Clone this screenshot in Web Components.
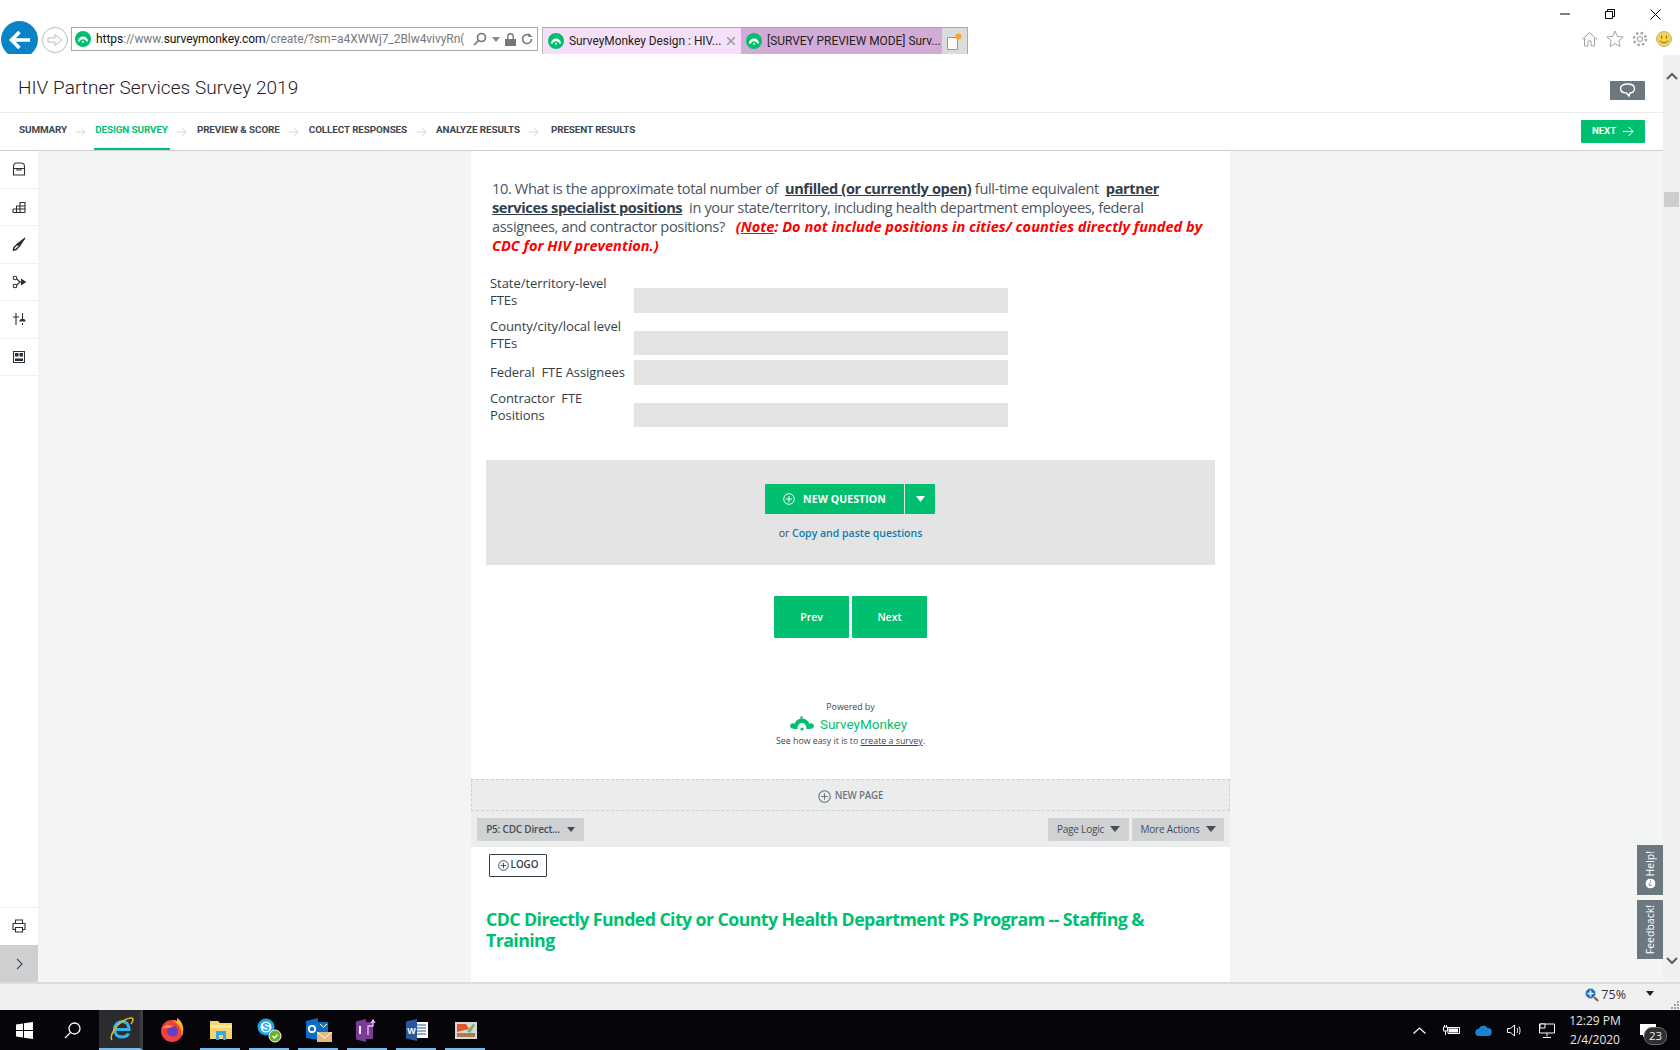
<!DOCTYPE html>
<html>
<head>
<meta charset="utf-8">
<title>HIV Partner Services Survey 2019</title>
<style>
  html, body { margin: 0; height: 100%; overflow: hidden; background: #fff; }
  body { display: flex; flex-direction: column; width: 1680px; height: 1050px; font-family: Roboto, "Liberation Sans", sans-serif; }
</style>
</head>
<body>
<browser-bar></browser-bar>
<page-area></page-area>
<status-bar></status-bar>
<task-bar></task-bar>

<script>
(function () {
'use strict';

const FAVICON = `<svg width="16" height="16" viewBox="0 0 16 16"><circle cx="8" cy="8" r="8" fill="#00bf6f"/><path d="M2.800 10.600c.3-3.200 2.400-5.200 5.200-5.200s4.900 2 5.200 5.200h-2c-.3-1.400-1.500-2.400-3.200-2.400s-2.900 1-3.200 2.400z" fill="#fff"/><circle cx="8" cy="10.800" r="1" fill="#fff"/></svg>`;
const PLUS = (size, color) => `<svg width="${size}" height="${size}" viewBox="0 0 12 12" fill="none" stroke="${color}" stroke-width="1"><circle cx="6" cy="6" r="5.300"/><path d="M6 3v6M3 6h6"/></svg>`;
const ARROW = `<svg width="12" height="10" viewBox="0 0 12 10" fill="none" stroke="#d3d6d8" stroke-width="1"><path d="M1 5h9M6.500 1.500 10 5 6.500 8.500"/></svg>`;

function define(name, css, html) {
    let template = document.createElement('template');
    template.innerHTML = `<style>${css}</style>${html}`;
    customElements.define(name, class extends HTMLElement {
        constructor() {
            super();
            this.attachShadow({ mode: 'open' }).appendChild(document.importNode(template.content, true));
        }
    });
}

define('browser-bar', `
    :host { display: flex; flex: none; height: 54px; align-items: flex-start; position: relative; background: #fff; font: 13px Roboto, sans-serif; color: #222; }
    .back { flex: none; width: 37px; height: 37px; margin: 21px 0 0 1px; border-radius: 50%; background: #0a84c6; display: flex; align-items: center; justify-content: center; clip-path: inset(0 0 4px 0); }
    .fwd { flex: none; width: 24px; height: 24px; margin: 27px 0 0 4px; border: 1px solid #bbb; border-radius: 50%; display: flex; align-items: center; justify-content: center; }
    .addr { flex: none; box-sizing: border-box; width: 467px; height: 24px; margin: 27px 0 0 3px; border: 1px solid #a9a9a9; display: flex; align-items: center; padding: 0 4px 0 3px; gap: 5px; }
    .url { flex: 1; white-space: nowrap; overflow: hidden; font-size: 12px; letter-spacing: -.06px; color: #777; }
    .url b { font-weight: 400; color: #111; }
    .tools { display: flex; align-items: center; gap: 5px; flex: none; }
    .tabs { flex: none; display: flex; height: 27px; margin: 27px 0 0 4px; box-sizing: border-box; border-top: 1px solid #aaa; }
    .tab { box-sizing: border-box; width: 200px; display: flex; align-items: center; gap: 4px; padding: 0 6px 0 5px; white-space: nowrap; font-size: 11.900px; }
    .tab.on { background: #f5dff9; border-left: 1px solid #bbb; width: 199px; }
    .tab.off { background: #d3abd7; width: 201px; padding-right: 1px; }
    .tab span { flex: 1; overflow: hidden; }
    .new { box-sizing: border-box; width: 26px; background: #dcdcdc; border-right: 1px solid #aaa; display: flex; align-items: center; justify-content: center; }
    .win { position: absolute; top: 8px; right: 19px; display: flex; align-items: center; gap: 35px; }
    .icons { position: absolute; top: 30px; right: 8px; display: flex; align-items: center; gap: 8px; }
`, `
    <div class="back"><svg width="24" height="20" viewBox="0 0 24 20" fill="none" stroke="#fff" stroke-width="3.600"><path d="M22 10H4M11.500 2 3.500 10l8 8"/></svg></div>
    <div class="fwd"><svg width="16" height="14" viewBox="0 0 16 14" fill="none" stroke="#bbb"><path d="M1 5h7V1.500L15 7l-7 5.500V9H1z"/></svg></div>
    <div class="addr">
      ${FAVICON}
      <div class="url"><b>https</b>://www.<b>surveymonkey.com</b>/create/?sm=a4XWWj7_2Blw4vivyRn(</div>
      <div class="tools">
        <svg width="14" height="14" viewBox="0 0 14 14" fill="none" stroke="#777" stroke-width="1.700"><circle cx="8.500" cy="5.500" r="4"/><path d="M5.500 8.500 1 13"/></svg>
        <svg width="8" height="5" viewBox="0 0 8 5"><path d="M0 0h8L4 5z" fill="#888"/></svg>
        <svg width="11" height="13" viewBox="0 0 11 13"><path d="M0 6h11v7H0z" fill="#777"/><path d="M2.800 6V3.500a2.700 2.700 0 0 1 5.400 0V6" fill="none" stroke="#777" stroke-width="1.400"/></svg>
        <svg width="12" height="12" viewBox="0 0 12 12" fill="none" stroke="#777" stroke-width="1.600"><path d="M10.500 6A4.500 4.500 0 1 1 8.500 2.300"/><path d="M7.500 0v4h4z" fill="#777" stroke="none"/></svg>
      </div>
    </div>
    <div class="tabs">
      <div class="tab on">${FAVICON}<span style="margin-left:1px">SurveyMonkey Design : HIV...</span><svg width="8" height="8" viewBox="0 0 8 8" stroke="#999" stroke-width="1.500"><path d="M0 0l8 8M8 0 0 8"/></svg></div>
      <div class="tab off">${FAVICON}<span style="margin-left:1px">[SURVEY PREVIEW MODE] Surv...</span></div>
      <div class="new"><svg width="15" height="17" viewBox="0 0 15 17"><path d="M.5 4.500h10v12H.5z" fill="#fafafa" stroke="#999"/><circle cx="11.500" cy="3.500" r="3" fill="#f7a823"/></svg></div>
    </div>
    <div class="win">
      <svg width="10" height="12" viewBox="0 0 10 12" stroke="#000"><path d="M0 6h10"/></svg>
      <svg width="10" height="10" viewBox="0 0 10 10" fill="none" stroke="#000"><path d="M.5 2.500h7v7h-7zM2.500 2.500v-2h7v7h-2"/></svg>
      <svg width="11" height="11" viewBox="0 0 11 11" stroke="#000"><path d="M.5.500l10 10M10.500.500l-10 10"/></svg>
    </div>
    <div class="icons">
      <svg width="17" height="16" viewBox="0 0 17 16" fill="none" stroke="#a3a3a3"><path d="M1 8.500 8.500 1.500 16 8.500M3.500 7v8h3.500v-5h3v5h3.500V7"/></svg>
      <svg width="18" height="17" viewBox="0 0 18 17" fill="none" stroke="#a3a3a3"><path d="M9 1l2.400 5.400 5.800.6-4.400 3.800 1.300 5.700L9 13.600l-5.100 2.900 1.300-5.700L.8 7l5.800-.6z"/></svg>
      <svg width="16" height="16" viewBox="0 0 16 16" fill="none" stroke="#a3a3a3" stroke-width="1.100"><circle cx="8" cy="8" r="2.500"/><circle cx="8" cy="8" r="6" stroke-dasharray="2.400 2.300" stroke-width="2.400"/></svg>
      <svg width="16" height="16" viewBox="0 0 16 16"><circle cx="8" cy="8" r="7.500" fill="#f6d34f" stroke="#b7b7a0"/><path d="M5.500 4.500v3M10.500 4.500v3" stroke="#7a6a20"/><path d="M4 9.500c1.500 3 6.500 3 8 0" fill="none" stroke="#7a6a20"/></svg>
    </div>
`);

define('app-header', `
    :host { display: flex; flex: none; height: 59px; align-items: center; justify-content: space-between; box-sizing: border-box; padding: 22px 18px 12px 18px; border-bottom: 1px solid #eceded; color: #1d2226; }
    h1 { margin: 0; font: 300 19px/24px Roboto, sans-serif; letter-spacing: .05px; }
    .talk { width: 35px; height: 19px; margin-top: 5px; background: #6b787f; display: flex; align-items: center; justify-content: center; border-radius: 1px; }
`, `
    <h1>HIV Partner Services Survey 2019</h1>
    <div class="talk"><svg width="17" height="15" viewBox="0 0 17 15" fill="none" stroke="#fff" stroke-width="1.400"><path d="M8.500 1c4 0 7 1.500 7 4.500S13 10 11 10l-1 3-2.500-3C4 10 1.500 8.500 1.500 5.500S4.500 1 8.500 1z"/></svg></div>
`);

define('step-item', `
    :host { display: flex; align-items: center; box-sizing: border-box; height: 37px; padding-bottom: 3px; position: relative; font: 700 9.900px/1 Roboto, sans-serif; color: #3e4750; white-space: nowrap; letter-spacing: -.1px; }
    :host([active]) { color: #00bf6f; }
    :host([active])::after { content: ""; position: absolute; left: -1px; right: -2px; bottom: 0; height: 2px; background: #00bf6f; }
`, `<slot></slot>`);

define('step-nav', `
    :host { display: flex; flex: none; height: 38px; box-sizing: border-box; padding: 0 18px 0 19px; align-items: center; border-bottom: 1px solid #cfd1d1; }
    .steps { display: flex; flex: 1; align-items: center; }
    .sep { width: 29px; display: flex; justify-content: center; }
    .sep.first { margin-left: -1px; }
    .next { width: 64px; height: 23px; background: #00bf6f; color: #fff; display: flex; align-items: center; justify-content: center; gap: 7px; font: 700 9.600px/1 Roboto, sans-serif; border-radius: 1px; }
    .next span { margin-top: -1px; }
`, `
    <div class="steps">
      <step-item>SUMMARY</step-item><div class="sep first">${ARROW}</div>
      <step-item active>DESIGN SURVEY</step-item><div class="sep">${ARROW}</div>
      <step-item>PREVIEW &amp; SCORE</step-item><div class="sep">${ARROW}</div>
      <step-item>COLLECT RESPONSES</step-item><div class="sep">${ARROW}</div>
      <step-item>ANALYZE RESULTS</step-item><div class="sep">${ARROW}</div>
      <step-item style="margin-left:2px">PRESENT RESULTS</step-item>
    </div>
    <div class="next"><span>NEXT</span> <svg width="11" height="11" viewBox="0 0 11 11" fill="none" stroke="#fff"><path d="M0 5.500h10M5.500 1 10 5.500 5.500 10"/></svg></div>
`);

define('side-rail', `
    :host { display: flex; flex: none; width: 38px; flex-direction: column; background: #fff; }
    .it { height: 37.500px; box-sizing: border-box; border-bottom: 1px solid #f0f1f1; display: flex; align-items: center; justify-content: center; flex: none; }
    .gap { flex: 1; border-bottom: 1px solid #f0f1f1; }
    .print { border-bottom: 0; }
    .open { height: 37px; background: #cdcfd1; display: flex; align-items: center; justify-content: center; flex: none; }
    svg { fill: none; stroke: #2b3036; stroke-width: 1.100; }
`, `
    <div class="it"><svg width="14" height="14" viewBox="0 0 14 14"><path d="M1.500 13h11V4.500c0-2-1.500-3.500-3.500-3.500H5C3 1 1.500 2.500 1.500 4.500zM1.500 6.500h11M5 6.500v1.500h4V6.500"/></svg></div>
    <div class="it"><svg width="14" height="14" viewBox="0 0 14 14"><path d="M1 12.500h12M1 9h12M1 12.500V9M4.500 12.500V6h8.500v6.500M8 12.500V2.500h5v10M4.500 6H13"/></svg></div>
    <div class="it"><svg width="14" height="14" viewBox="0 0 14 14"><path d="M13 1 6 6.500 8 8.500 13 1z" fill="#2b3036"/><path d="M5.500 7 2 10.500l-.5 2.500 2.500-.5L7.500 9z" stroke-width="1.500"/></svg></div>
    <div class="it"><svg width="14" height="14" viewBox="0 0 14 14"><circle cx="3" cy="3" r="1.800"/><circle cx="3" cy="11" r="1.800"/><path d="M4.800 4 8 7 4.800 10M7 7h4"/><path d="M9.500 4.500 13.500 7 9.500 9.500z" fill="#2b3036"/></svg></div>
    <div class="it"><svg width="14" height="14" viewBox="0 0 14 14"><path d="M4 1v12M1 5h6M10.500 1v7M10.500 11v2"/><path d="M8 9h5l-1-1.500h-3z" fill="#2b3036"/></svg></div>
    <div class="it"><svg width="12" height="12" viewBox="0 0 12 12"><path d="M.5.500h11v11H.5z"/><path d="M2 2h3.500v3.500H2zM6.500 2H10v3.500H6.500zM2 7.500h8V10H2z" fill="#2b3036" stroke="none"/></svg></div>
    <div class="gap"></div>
    <div class="it print"><svg width="14" height="14" viewBox="0 0 14 14" stroke-width="1.300"><path d="M3.500 4V1h7v3M3.500 10.500H1V4.500h12v6h-2.500M3.500 8.500h7V13h-7z"/></svg></div>
    <div class="open"><svg width="7" height="12" viewBox="0 0 7 12" style="stroke:#444d55"><path d="M1 1l5 5-5 5"/></svg></div>
`);

define('question-row', `
    :host { display: grid; grid-template-columns: 144px 374px; padding-left: 19px; color: #333e48; font: 400 13px/17px "Open Sans", sans-serif; letter-spacing: -.05px; }
    .lab { align-self: start; padding-top: var(--lab, 1px); white-space: nowrap; }
    :host([mid]) .lab { align-self: center; padding-top: 0; }
    .box { align-self: end; height: var(--box, 25px); background: #e4e4e4; }
`, `<div class="lab"><slot></slot></div><div class="box"></div>`);

define('question-block', `
    :host { display: block; padding: 28px 20px 0 21px; color: #4b5560; font: 400 14.600px/19px "Open Sans", sans-serif; letter-spacing: -.37px; white-space: nowrap; }
    b { font-weight: 700; color: #333e48; text-decoration: underline; letter-spacing: -.38px; }
    i { color: #f00; font-weight: 700; letter-spacing: -.01px; margin-left: 4px; }
    i u { text-decoration: underline; }
    p { margin: 0; }
`, `
    <p>10. What is the approximate total number of &nbsp;<b>unfilled (or currently open)</b> full-time equivalent &nbsp;<b>partner</b><br>
    <b>services specialist positions</b> &nbsp;in your state/territory, including health department employees, federal<br>
    assignees, and contractor positions? &nbsp;<i>(<u>Note</u>: Do not include positions in cities/ counties directly funded by<br>
    CDC for HIV prevention.)</i></p>
`);

define('add-question', `
    :host { display: flex; flex-direction: column; align-items: center; box-sizing: border-box; height: 105px; margin: 33px 15px 0 15px; padding-top: 24px; background: #e4e4e4; font: 400 10.500px/1 "Open Sans", sans-serif; color: #3e4750; }
    .btn { display: flex; height: 30px; margin-left: -1px; color: #fff; font: 700 10.500px/30px "Open Sans", sans-serif; letter-spacing: .1px; }
    .main { width: 139px; background: #00bf6f; display: flex; align-items: center; justify-content: center; gap: 8px; border-radius: 1px 0 0 1px; }
    .drop { width: 30px; margin-left: 1px; background: #00bf6f; display: flex; align-items: center; justify-content: center; border-radius: 0 1px 1px 0; }
    .or { margin-top: 14px; }
    a { color: #0b7eb5; font-weight: 600; }
`, `
    <div class="btn">
      <div class="main">${PLUS(12, '#fff')}<span>NEW QUESTION</span></div>
      <div class="drop"><svg width="9" height="6" viewBox="0 0 9 6"><path d="M0 0h9L4.500 6z" fill="#fff"/></svg></div>
    </div>
    <div class="or">or <a>Copy and paste questions</a></div>
`);

define('pager-buttons', `
    :host { display: flex; justify-content: center; gap: 3px; margin-top: 31px; font: 600 10.500px/1 "Open Sans", sans-serif; color: #fff; }
    div { width: 75px; height: 42px; background: #00bf6f; display: flex; align-items: center; justify-content: center; border-radius: 1px; }
`, `<div>Prev</div><div>Next</div>`);

define('powered-by', `
    :host { display: flex; flex-direction: column; align-items: center; margin-top: 65px; font: 400 8.800px/1 "Open Sans", sans-serif; color: #3e4750; }
    .logo { display: flex; align-items: center; gap: 6px; margin: 4px 4px 5px 0; height: 16px; font: 400 13.500px/16px Roboto, sans-serif; color: #00bf6f; }
    u { text-decoration: underline; }
`, `
    <div>Powered by</div>
    <div class="logo"><svg width="24" height="15" viewBox="0 0 24 15" fill="#00bf6f"><path d="M4 13C4 6 7 2.500 12 2.500S20 6 20 13h-3.500C16.500 9.500 15 7 12 7S7.500 9.500 7.500 13z"/><circle cx="3" cy="10" r="2.800"/><circle cx="21" cy="10" r="2.800"/><circle cx="12" cy="13" r="1.600"/><path d="M10 1l2-1 1 2-2 1z"/></svg><span>SurveyMonkey</span></div>
    <div>See how easy it is to <u>create a survey</u>.</div>
`);

define('page-tools', `
    :host { display: block; margin-top: 33px; background: #ebeded; }
    .new { box-sizing: border-box; height: 32px; padding-top: 3px; border: 1px dashed #cfd1d1; display: flex; align-items: center; justify-content: center; gap: 4px; font: 600 9.800px/1 "Open Sans", sans-serif; color: #6b7580; letter-spacing: -.2px; }
    .bar { height: 36px; box-sizing: border-box; padding: 7px 6px 6px; display: flex; gap: 3px; font: 400 10px/23px "Open Sans", sans-serif; color: #454e57; letter-spacing: -.2px; }
    .pick { height: 23px; background: #cfd1d3; display: flex; align-items: center; justify-content: center; gap: 6px; border-radius: 1px; white-space: nowrap; }
    .p5 { width: 107px; margin-right: auto; font-weight: 600; gap: 7px; }
    .pl { width: 81px; }
    .ma { width: 92px; }
`, `
    <div class="new">${PLUS(13, '#6b7580')}<span>NEW PAGE</span></div>
    <div class="bar">
      <div class="pick p5">P5: CDC Direct...<svg width="8" height="5" viewBox="0 0 8 5"><path d="M0 0h8L4 5z" fill="#454e57"/></svg></div>
      <div class="pick pl">Page Logic<svg width="10" height="6" viewBox="0 0 10 6"><path d="M0 0h10L5 6z" fill="#454e57"/></svg></div>
      <div class="pick ma">More Actions<svg width="10" height="6" viewBox="0 0 10 6"><path d="M0 0h10L5 6z" fill="#454e57"/></svg></div>
    </div>
`);

define('page-start', `
    :host { display: block; padding: 7px 15px 0 15px; }
    .logo { width: 58px; height: 23px; margin-left: 3px; box-sizing: border-box; border: 1px solid #333e48; border-radius: 1px; display: flex; align-items: center; justify-content: center; gap: 2px; font: 600 9.800px/1 "Open Sans", sans-serif; color: #333e48; }
    h2 { margin: 32px 0 0; font: 700 17.800px/21.500px "Open Sans", sans-serif; color: #00bf6f; letter-spacing: -.6px; white-space: nowrap; }
`, `
    <div class="logo">${PLUS(11, '#333e48')}<span>LOGO</span></div>
    <h2>CDC Directly Funded City or County Health Department PS Program -- Staffing &amp;<br>Training</h2>
`);

define('survey-panel', `
    :host { display: block; flex: none; width: 759px; margin-left: 433px; background: #fff; overflow: hidden; }
`, `<slot></slot>`);

define('float-tabs', `
    :host { position: absolute; right: 17px; top: 694px; display: flex; flex-direction: column; gap: 5px; font: 400 10.500px/1 "Open Sans", sans-serif; color: #fff; }
    div { width: 26px; background: #6b787f; display: flex; align-items: center; justify-content: center; writing-mode: vertical-rl; }
    span { display: flex; align-items: center; gap: 2px; transform: rotate(180deg); }
    .h { height: 50px; }
    .f { height: 59px; }
`, `
    <div class="h"><span><svg width="10" height="10" viewBox="0 0 10 10"><circle cx="5" cy="5" r="5" fill="#fff"/><path d="M3.500 3.800c.6-1.500 3-1.200 3 .3 0 1-1.500 1.100-1.500 2.200M5 7.200v1" fill="none" stroke="#6b787f"/></svg>Help!</span></div>
    <div class="f"><span>Feedback!</span></div>
`);

define('scroll-bar', `
    :host { display: flex; flex-direction: column; flex: none; width: 17px; height: 927px; background: #f0f0f0; align-items: center; position: absolute; right: 0; top: 1px; }
    .thumb { width: 15px; height: 15px; background: #cdcdcd; margin-top: 112px; }
    svg { flex: none; }
    .up { margin-top: 17px; }
    .down { margin-top: auto; margin-bottom: 17px; }
`, `
    <svg class="up" width="12" height="8" viewBox="0 0 12 8" fill="none" stroke="#5c5c5c" stroke-width="2"><path d="M1 7l5-5 5 5"/></svg>
    <div class="thumb"></div>
    <svg class="down" width="12" height="8" viewBox="0 0 12 8" fill="none" stroke="#5c5c5c" stroke-width="2"><path d="M1 1l5 5 5-5"/></svg>
`);

define('page-area', `
    :host { display: flex; flex-direction: column; flex: none; height: 928px; position: relative; }
    .main { display: flex; flex: 1; min-height: 0; background: #f3f5f4; position: relative; overflow: hidden; }
    .head { margin-right: 17px; display: flex; flex-direction: column; flex: none; }
`, `
    <div class="head"><app-header></app-header><step-nav></step-nav></div>
    <div class="main">
      <side-rail></side-rail>
      <survey-panel>
        <question-block></question-block>
        <question-row style="margin-top:19px;height:39px">State/territory-level<br>FTEs</question-row>
        <question-row style="margin-top:3px;height:39px;--box:24px;--lab:2px">County/city/local level<br>FTEs</question-row>
        <question-row mid style="margin-top:5px;height:25px">Federal &nbsp;FTE Assignees</question-row>
        <question-row style="margin-top:4px;height:38px;--box:24px">Contractor &nbsp;FTE<br>Positions</question-row>
        <add-question></add-question>
        <pager-buttons></pager-buttons>
        <powered-by></powered-by>
        <page-tools></page-tools>
        <page-start></page-start>
      </survey-panel>
      <float-tabs></float-tabs>
    </div>
    <scroll-bar></scroll-bar>
`);

define('status-bar', `
    :host { display: flex; flex: none; height: 28px; box-sizing: border-box; border-top: 2px solid #dcdcdc; background: #f0f0f0; align-items: center; justify-content: flex-end; font: 400 12.500px/1 "Open Sans", sans-serif; color: #333; position: relative; }
    .zoom { display: flex; align-items: center; gap: 2px; margin: 0 54px 4px 0; }
    .caret { position: absolute; right: 26px; top: 7px; }
    .grip { position: absolute; right: 1px; bottom: 1px; }
`, `
    <div class="zoom"><svg width="14" height="14" viewBox="0 0 14 14"><path d="M8 8l5 5" stroke="#8a5a2b" stroke-width="2"/><circle cx="5.500" cy="5.500" r="5" fill="#0a6cc4" stroke="#b7c4d0"/><path d="M5.500 2.500v6M2.500 5.500h6" stroke="#fff" stroke-width="1.600"/></svg><span>75%</span></div>
    <svg class="caret" width="8" height="5" viewBox="0 0 8 5"><path d="M0 0h8L4 5z" fill="#222"/></svg>
    <svg class="grip" width="8" height="8" viewBox="0 0 8 8" fill="#a5a5a5"><path d="M6 0h2v2H6zM3 3h2v2H3zM6 3h2v2H6zM0 6h2v2H0zM3 6h2v2H3zM6 6h2v2H6z"/></svg>
`);

define('task-app', `
    :host { display: flex; flex: none; width: 49px; height: 40px; align-items: center; justify-content: center; position: relative; box-sizing: border-box; }
    :host([run])::after { content: ""; position: absolute; left: 4px; right: 5px; bottom: 0; height: 2px; background: #76b9ed; }
`, `<slot></slot>`);

define('task-bar', `
    :host { display: flex; flex: none; height: 40px; background: #05050a; color: #fff; align-items: center; position: relative; }
    .btn { width: 48px; height: 40px; display: flex; align-items: center; justify-content: center; flex: none; }
    .ie { width: 44px; height: 40px; padding-left: 3px; background: #2c2c2f; display: flex; align-items: center; justify-content: center; flex: none; margin-left: 3px; margin-right: 4px; box-sizing: border-box; border-bottom: 2px solid #76b9ed; border-right: 3px solid #3d3d40; }
    .tray { margin-left: auto; display: flex; align-items: center; height: 40px; }
    .t { width: 32px; display: flex; justify-content: center; }
    .clock { width: 64px; text-align: center; font: 400 12px/19px "Open Sans", sans-serif; color: #e6e6e6; }
    .note { width: 42px; height: 40px; display: flex; align-items: center; justify-content: center; position: relative; margin-right: 11px; }
    .badge { position: absolute; left: 17px; top: 17px; width: 21px; height: 16px; border-radius: 8px; background: #2f2f2f; border: 1px solid #666; font: 400 11.500px/16px "Open Sans", sans-serif; text-align: center; color: #eee; }
`, `
    <div class="btn"><svg width="17" height="17" viewBox="0 0 17 17" fill="#fff"><path d="M0 2.400 7 1.400v6.600H0zM8 1.300 17 0v8H8zM0 9h7v6.600L0 14.600zM8 9h9v8l-9-1.300z"/></svg></div>
    <div class="btn"><svg width="17" height="17" viewBox="0 0 17 17" fill="none" stroke="#fff" stroke-width="1.300"><circle cx="10.500" cy="6.500" r="5.500"/><path d="M6.500 10.500 1 16"/></svg></div>
    <div class="ie"><svg width="26" height="26" viewBox="0 0 26 26" fill="none"><path d="M7 13.500h14c0-5.500-3.500-8-7-8s-7.500 3-7.500 8 3.500 7.500 7.500 7.500c3.200 0 5.500-1.500 6.500-3.500" stroke="#2fb6ea" stroke-width="3.200"/><path d="M4 24C1 20 8 9 15 5c5-3 9-4 10-2 .5 1.500-1 3.500-2 5" stroke="#eeb61f" stroke-width="1.500"/></svg></div>
    <task-app><svg width="24" height="24" viewBox="0 0 24 24"><circle cx="12" cy="13" r="11" fill="#f0413e"/><path d="M12 2c6 0 11 4.500 11 11 0 2-.5 4-1.500 5.500C22 10 17 5 12 2z" fill="#ff9b21"/><path d="M17 0c5 3 7 9 6 14-1-4-3-7-6-9z" fill="#ffb727"/><circle cx="12.500" cy="13" r="5.500" fill="#6a3bc5"/><path d="M2 10l5-3 7 1-5 2z" fill="#ff9b21"/></svg></task-app>
    <task-app run><svg width="22" height="20" viewBox="0 0 22 20"><path d="M0 1h8l2 2h12v16H0z" fill="#f5d56f"/><path d="M0 5h22v3H0z" fill="#fbe89c"/><path d="M6 11h10v9h-3v-5H9v5H6z" fill="#37a7ea"/></svg></task-app>
    <task-app run><svg width="25" height="25" viewBox="0 0 25 25"><circle cx="9" cy="9" r="8.500" fill="#1ca5e6"/><circle cx="9" cy="9" r="5.500" fill="#fff"/><text x="9" y="13" text-anchor="middle" font-family="Liberation Sans" font-weight="700" font-size="11" fill="#1ca5e6">S</text><circle cx="18" cy="18" r="6" fill="#6fb12c" stroke="#fff"/><path d="M15.500 18l2 2 3-3.500" stroke="#fff" stroke-width="1.300" fill="none"/></svg></task-app>
    <task-app run><svg width="26" height="25" viewBox="0 0 26 25"><path d="M10 4h12v10H10z" fill="#0a6ec4"/><path d="M0 3l12-3v22L0 20z" fill="#0a6ec4"/><circle cx="6" cy="11" r="3.200" fill="none" stroke="#fff" stroke-width="1.800"/><path d="M14 6l3.500 3L21 6" stroke="#fff" fill="none"/><path d="M11 14h15v10H11z" fill="#e8b878"/><path d="M11 14l7.500 6 7.500-6" stroke="#fff" fill="none"/></svg></task-app>
    <task-app run><svg width="23" height="23" viewBox="0 0 23 23"><path d="M0 2.500 10 0v23L0 20.500z" fill="#7b3c97"/><path d="M10 3h7v17h-7z" fill="#7b3c97"/><path d="M4 7v8" stroke="#fff" stroke-width="2"/><path d="M12 16V7h5V2M15 4l2-3 2 3" stroke="#e0c5ee" fill="none" stroke-width="1.300"/></svg></task-app>
    <task-app run><svg width="22" height="22" viewBox="0 0 22 22"><path d="M9 3h13v16H9z" fill="#fff"/><path d="M11 6h9M11 9h9M11 12h9M11 15h9" stroke="#2a5699" stroke-width="1.200"/><path d="M0 2.500 11 0v22L0 19.500z" fill="#2a5699"/><text x="5.500" y="14.500" text-anchor="middle" font-family="Liberation Sans" font-weight="700" font-size="9" fill="#fff">W</text></svg></task-app>
    <task-app run><svg width="22" height="17" viewBox="0 0 22 17"><path d="M0 0h22v17H0z" fill="#d8d8d8"/><path d="M2 2h9l3 5-12 3z" fill="#e2572a"/><path d="M2 11h18v4H2z" fill="#a67c52"/><path d="M12 9l6-7 2 1-5 8z" fill="#7ab648"/></svg></task-app>
    <div class="tray">
      <div class="t"><svg width="13" height="7" viewBox="0 0 13 7" fill="none" stroke="#fff" stroke-width="1.200"><path d="M.5 6.500l6-5.500 6 5.500"/></svg></div>
      <div class="t"><svg width="17" height="12" viewBox="0 0 17 12" fill="none" stroke="#fff"><path d="M.5 3h4v4h-4zM1.500 1v2M3.500 1v2M2.500 7v4"/><path d="M5 3.500h11.500v6H5z"/><path d="M6 4.500h9v4H6z" fill="#fff" stroke="none"/></svg></div>
      <div class="t"><svg width="17" height="11" viewBox="0 0 17 11"><path d="M4 11a3.500 3.500 0 0 1-.5-7A5 5 0 0 1 12.500 3 4 4 0 0 1 13 11z" fill="#1b82d4"/></svg></div>
      <div class="t"><svg width="16" height="13" viewBox="0 0 16 13" fill="none" stroke="#fff"><path d="M.5 4.500h3L7.500 1v11l-4-3.500h-3zM10 4c.8 1.500.8 3.500 0 5M12 2.500c1.400 2.500 1.400 5.500 0 8"/></svg></div>
      <div class="t"><svg width="16" height="15" viewBox="0 0 16 15" fill="none" stroke="#fff"><path d="M.5 1h15v9H.5zM8 10v3.500M4 14.500h8"/><path d="M1 1h5v4H1z" fill="#05050a"/></svg></div>
      <div class="clock">12:29 PM<br>2/4/2020</div>
      <div class="note"><svg width="16" height="13" viewBox="0 0 16 13" fill="#fff"><path d="M0 0h16v11H5l-2 2v-2H0z"/></svg><div class="badge">23</div></div>
    </div>
`);

}());
</script>
</body>
</html>
